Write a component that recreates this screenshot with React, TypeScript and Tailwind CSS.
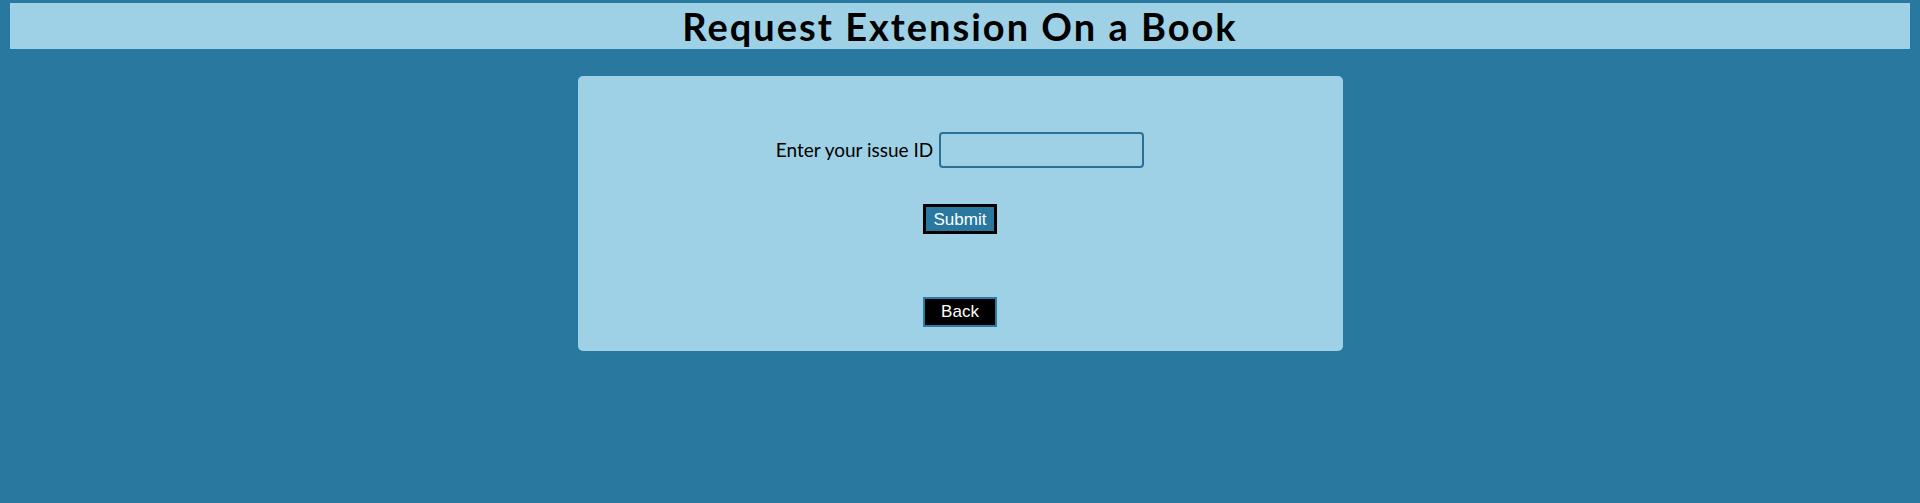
export default function App() {
  return (
    <div className="min-h-[503px] bg-[#28789f] pt-[3px] px-[10px] font-['Lato',sans-serif]">
      <div className="h-[46px] bg-[#9ed1e5] flex items-center justify-center">
        <h1 className="text-[38px] font-bold text-black leading-none tracking-[2px]">Request Extension On a Book</h1>
      </div>

      <div className="w-[765px] h-[275px] mx-auto mt-[27px] bg-[#9ed1e5] rounded-[5px] flex flex-col items-center pt-[56px]">
        <div className="flex items-center gap-[6px]">
          <label className="text-[19px] text-black">Enter your issue ID</label>
          <input
            type="text"
            className="w-[205px] h-[36px] border-2 border-[#2b7098] rounded-[4px] bg-transparent outline-none"
          />
        </div>

        <button className="mt-[36px] w-[74px] h-[30px] bg-[#28789f] border-[3px] border-black text-white text-[17px] font-['Liberation_Sans',sans-serif]">
          Submit
        </button>

        <button className="mt-[63px] w-[74px] h-[30px] bg-black border-2 border-[#2d7aa0] text-white text-[17px] font-['Liberation_Sans',sans-serif]">
          Back
        </button>
      </div>
    </div>
  );
}
